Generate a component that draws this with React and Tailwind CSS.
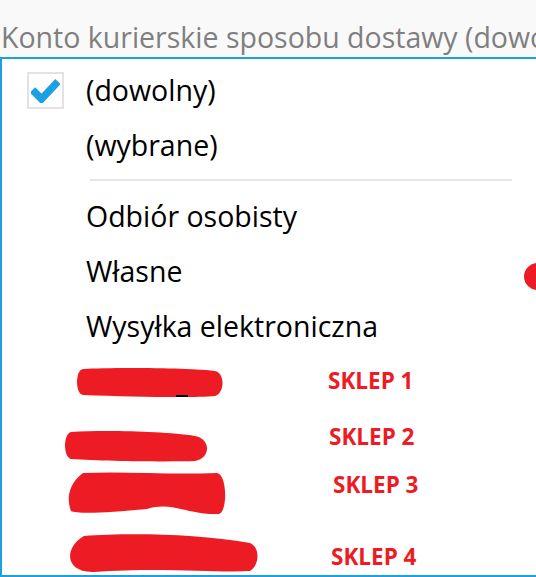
import React from 'react';

const font = { fontFamily: '"Open Sans", "Noto Sans", sans-serif' };

// Zamazane pozycje (czerwone plamy) z etykietami sklepów
const shops = [
  { label: 'SKLEP 1', blob: 'M8 2 C40 0 120 1 140 4 C150 6 150 26 140 29 C120 31 60 30 8 28 C0 27 0 3 8 2 Z', w: 150, bx: 75, by: 367, h: 32, ly: 'mt-[0px]' },
  { label: 'SKLEP 2', blob: 'M8 2 C40 0 100 1 132 6 C148 9 148 28 132 31 C100 32 40 31 8 29 C0 27 0 4 8 2 Z', w: 148, bx: 63, by: 430, h: 33, ly: 'mt-[2px] ml-[1px]' },
  { label: 'SKLEP 3', blob: 'M16 2 C60 0 100 4 150 2 C160 3 161 40 152 43 C120 44 105 30 80 38 C40 42 10 43 4 40 C0 30 0 14 16 2 Z', w: 162, bx: 67, by: 471, h: 44, ly: 'mt-[-12px] ml-[5px]' },
  { label: 'SKLEP 4', blob: 'M20 3 C60 0 130 0 186 10 C196 14 196 32 186 38 C150 40 100 34 30 39 C0 40 0 14 20 3 Z', w: 196, bx: 64, by: 533, h: 40, ly: 'mt-[22px] ml-[3px]' },
];

const Row = ({ children }) => (
  <div className="h-[55px] flex items-center pl-[84px] text-[28.5px] text-black leading-none">{children}</div>
);

const App = () => {
  return (
    <div className="w-[536px] h-[577px] overflow-hidden bg-white relative" style={font}>
      <div className="h-[57px] bg-[#f9f9f9] flex items-end pl-[1px] pb-[6px] overflow-hidden">
        <span className="text-[28.5px] text-[#7f7f7f] whitespace-nowrap leading-none">Konto kurierskie sposobu dostawy (dowolny)</span>
      </div>
      <div className="h-[520px] border-t-2 border-l-2 border-b-2 border-[#1ba1e2] pt-[4px] relative">
        <div className="h-[55px] flex items-center text-[28.5px] leading-none">
          <div className="ml-[25px] mr-[22px] w-[37px] h-[37px] border-2 border-[#e3e3e3] flex items-center justify-center">
            <svg width="29" height="25" viewBox="0 0 29 25">
              <path d="M1.5 12 L10.5 21 L27 3.5" fill="none" stroke="#1ba1e2" strokeWidth="7.5" />
            </svg>
          </div>
          <span>(dowolny)</span>
        </div>
        <Row>(wybrane)</Row>
        <div className="ml-[88px] mr-[24px] h-[2px] bg-[#e5e5e5] mt-[6px] mb-[8px]" />
        <Row>Odbiór osobisty</Row>
        <Row>Własne</Row>
        <Row>Wysyłka elektroniczna</Row>

        {shops.map((s) => (
          <div key={s.label} className="h-[55px] flex items-center pl-[326px]">
            <span className={`text-[22.5px] font-bold leading-none text-[#ed1c24] whitespace-nowrap ${s.ly}`}>{s.label}</span>
          </div>
        ))}

        {/* Plamy zasłaniające nazwy */}
        {shops.map((s) => (
          <svg
            key={s.label + '-blob'}
            className="absolute"
            style={{ left: s.bx - 2, top: s.by - 59, width: s.w, height: s.h }}
            viewBox={`0 0 ${s.w} ${s.h}`}
          >
            <path d={s.blob} fill="#ed1c24" />
          </svg>
        ))}
        <div className="absolute left-[174px] top-[336px] w-[12px] h-[2px] bg-black" />
      </div>

      <div className="absolute left-[524px] top-[263px] w-[27px] h-[27px] rounded-full bg-[#ed1c24]" />
    </div>
  );
};

export default App;
